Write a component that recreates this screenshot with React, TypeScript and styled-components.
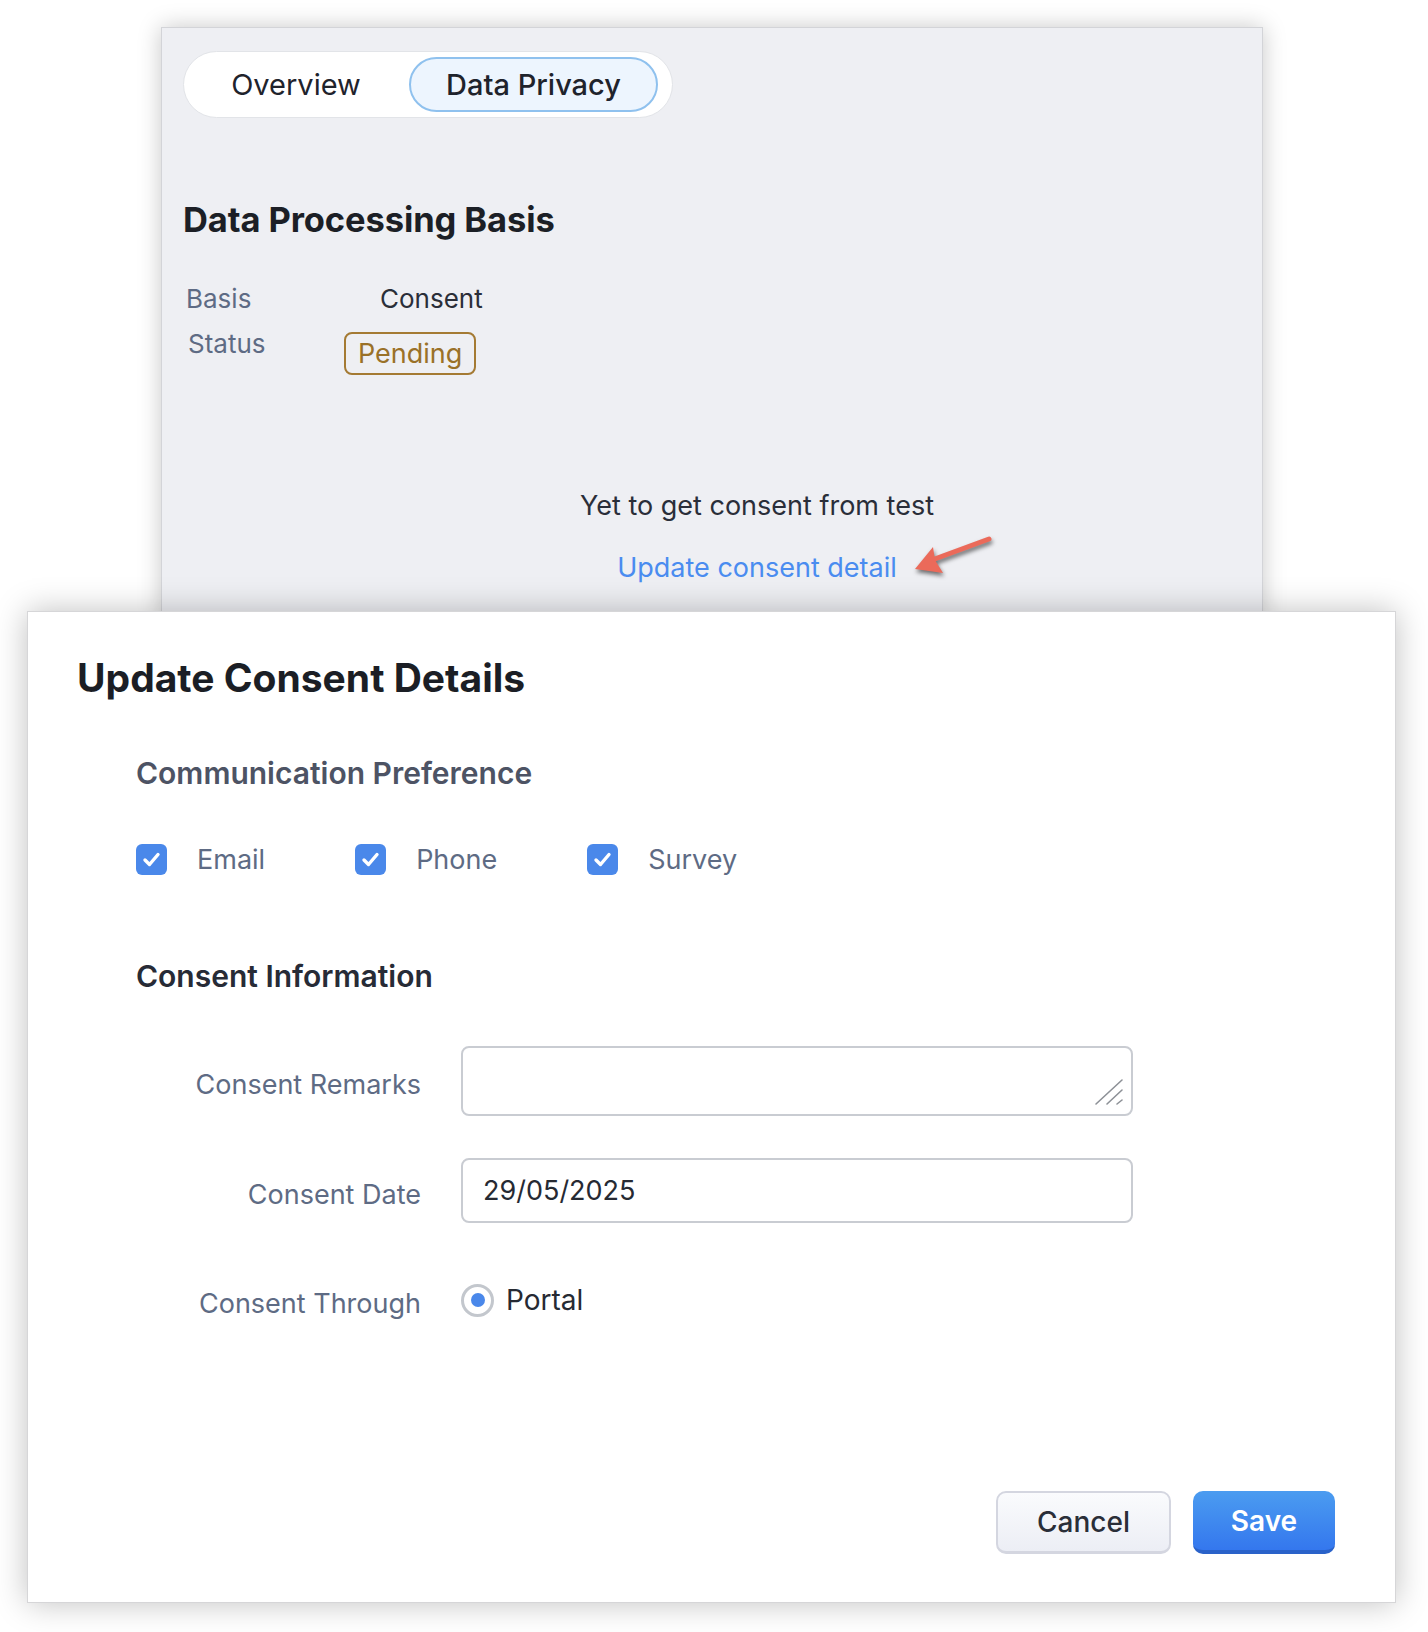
import React from "react";
import styled, { createGlobalStyle } from "styled-components";

const GlobalStyle = createGlobalStyle`
  html, body { margin: 0; padding: 0; background: #ffffff; }
  body {
    font-family: Inter, "Noto Sans", Arial, sans-serif;
    -webkit-font-smoothing: antialiased;
  }
  * { box-sizing: border-box; }
`;

const Page = styled.div`
  width: 1428px;
  height: 1632px;
  padding-top: 27px;
  overflow: hidden;
  background: #ffffff;
`;

/* ---------- Record panel (behind) ---------- */

const RecordPanel = styled.section`
  margin-left: 161px;
  width: 1102px;
  height: 594px;
  margin-bottom: -10px;
  background: #eeeff3;
  border: 1px solid #d3d4d8;
  box-shadow: 0 0 22px rgba(0, 0, 0, 0.22);
  padding: 23px 0 0 21px;
  display: flex;
  flex-direction: column;
`;

const TabSwitch = styled.div`
  display: flex;
  align-items: center;
  gap: 6px;
  width: 490px;
  height: 67px;
  padding: 5px 14px 5px 5px;
  background: #ffffff;
  border: 1px solid #e2e4e8;
  border-radius: 34px;
`;

const Tab = styled.button<{ $active?: boolean }>`
  width: ${(p) => (p.$active ? 249 : 214)}px;
  height: 55px;
  padding: 0;
  border-radius: 28px;
  border: 2px solid ${(p) => (p.$active ? "#8fc1ee" : "transparent")};
  background: ${(p) => (p.$active ? "#edf5fe" : "transparent")};
  font-family: Inter, sans-serif;
  font-size: 29px;
  font-weight: ${(p) => (p.$active ? 500 : 400)};
  color: #1f232c;
  cursor: pointer;
`;

const PanelTitle = styled.h2`
  margin: 81px 0 0 0;
  font-size: 34.5px;
  line-height: 42px;
  font-weight: 700;
  letter-spacing: -0.1px;
  color: #1c1f26;
`;

const InfoRow = styled.div<{ $offset: number; $gap: number }>`
  display: flex;
  align-items: flex-start;
  margin-top: ${(p) => p.$gap}px;
  padding-left: ${(p) => p.$offset}px;
`;

const InfoLabel = styled.span<{ $width: number }>`
  width: ${(p) => p.$width}px;
  font-size: 26px;
  line-height: 36px;
  color: #5e6b84;
`;

const InfoValue = styled.span`
  font-size: 26px;
  line-height: 36px;
  color: #2a2e38;
`;

const StatusBadge = styled.span`
  margin-top: 6px;
  height: 43px;
  padding: 0 12px;
  display: inline-flex;
  align-items: center;
  border: 2px solid #a47a33;
  border-radius: 8px;
  font-size: 27px;
  color: #9a7128;
`;

const ConsentPrompt = styled.div`
  margin-top: 113px;
  padding-left: 69px;
  text-align: center;
`;

const PromptText = styled.div`
  font-size: 27px;
  line-height: 36px;
  color: #2a2e39;
`;

const LinkLine = styled.div`
  margin-top: 26px;
  line-height: 36px;
`;

const ActionLink = styled.a`
  position: relative;
  display: inline-block;
  font-size: 27px;
  line-height: 36px;
  color: #4a8cf0;
  text-decoration: none;
  cursor: pointer;
`;

const ArrowMark = styled.svg`
  position: absolute;
  left: calc(100% + 14px);
  top: -22px;
  overflow: visible;
  filter: drop-shadow(1px 3px 2px rgba(0, 0, 0, 0.55));
`;

/* ---------- Dialog ---------- */

const Dialog = styled.section`
  position: relative;
  z-index: 1;
  margin-left: 27px;
  width: 1369px;
  height: 992px;
  background: #ffffff;
  border: 1px solid #d6d6d8;
  box-shadow: 0 0 30px rgba(0, 0, 0, 0.25);
  display: flex;
  flex-direction: column;
  padding: 42px 60px 48px 49px;
`;

const DialogTitle = styled.h1`
  margin: 0;
  font-size: 39px;
  line-height: 47px;
  font-weight: 700;
  color: #1b1e25;
`;

const Section = styled.div`
  padding-left: 59px;
  display: flex;
  flex-direction: column;
`;

const SectionTitle = styled.h3<{ $muted?: boolean; $gap: number }>`
  margin: ${(p) => p.$gap}px 0 0 0;
  font-size: 30px;
  line-height: 36px;
  font-weight: 600;
  color: ${(p) => (p.$muted ? "#4d5364" : "#272b36")};
`;

const CheckRow = styled.div`
  margin-top: 48px;
  height: 40px;
  display: flex;
  align-items: center;
  gap: 90px;
`;

const CheckItem = styled.label`
  display: flex;
  align-items: center;
  gap: 30px;
  font-size: 27px;
  color: #5e6b84;
  cursor: pointer;
`;

const CheckBox = styled.span`
  width: 31px;
  height: 31px;
  border-radius: 6px;
  background: #4a88ea;
  display: flex;
  align-items: center;
  justify-content: center;
`;

const FormGrid = styled.div`
  margin-top: 52px;
  display: grid;
  grid-template-columns: 285px 672px;
  column-gap: 40px;
  row-gap: 42px;
  align-items: center;
`;

const FieldLabel = styled.div`
  padding-top: 8px;
  text-align: right;
  font-size: 27px;
  line-height: 36px;
  color: #5e6b84;
`;

const TextBox = styled.div<{ $height: number }>`
  position: relative;
  height: ${(p) => p.$height}px;
  border: 2px solid #c9ccd2;
  border-radius: 8px;
  background: #ffffff;
  display: flex;
  align-items: center;
  padding-left: 20px;
  font-size: 27px;
  color: #262a33;
`;

const ResizeGrip = styled.svg`
  position: absolute;
  right: 7px;
  bottom: 8px;
`;

const RadioLine = styled.div`
  height: 70px;
  display: flex;
  align-items: center;
  gap: 12px;
  font-size: 28px;
  color: #262a33;
`;

const Radio = styled.span`
  width: 33px;
  height: 33px;
  border-radius: 50%;
  border: 3px solid #c3c7cd;
  background: #ffffff;
  display: flex;
  align-items: center;
  justify-content: center;
  &::after {
    content: "";
    width: 14px;
    height: 14px;
    border-radius: 50%;
    background: #4a88ea;
  }
`;

const ButtonBar = styled.div`
  margin-top: auto;
  display: flex;
  justify-content: flex-end;
  gap: 22px;
`;

const SecondaryButton = styled.button`
  width: 175px;
  height: 63px;
  border-radius: 10px;
  border: 2px solid #d4d6e0;
  border-bottom-width: 3px;
  background: linear-gradient(#fafbfd, #eceef5);
  font-family: Inter, sans-serif;
  font-size: 28px;
  font-weight: 500;
  color: #2a2e38;
  cursor: pointer;
`;

const PrimaryButton = styled.button`
  width: 142px;
  height: 63px;
  border-radius: 10px;
  border: none;
  border-bottom: 4px solid #2a62c9;
  background: linear-gradient(#4b9cf0, #3477ee);
  font-family: Inter, sans-serif;
  font-size: 28px;
  font-weight: 600;
  color: #ffffff;
  cursor: pointer;
`;

const Check = () => (
  <svg width="19" height="19" viewBox="0 0 19 19">
    <polyline
      points="3,10 7.5,14.5 16,4.5"
      fill="none"
      stroke="#ffffff"
      strokeWidth="3.4"
      strokeLinecap="round"
      strokeLinejoin="round"
    />
  </svg>
);

const prefs = ["Email", "Phone", "Survey"];

export default function App() {
  return (
    <>
      <GlobalStyle />
      <Page>
        <RecordPanel>
          <TabSwitch>
            <Tab>Overview</Tab>
            <Tab $active>Data Privacy</Tab>
          </TabSwitch>

          <PanelTitle>Data Processing Basis</PanelTitle>

          <InfoRow $offset={3} $gap={40}>
            <InfoLabel $width={194}>Basis</InfoLabel>
            <InfoValue>Consent</InfoValue>
          </InfoRow>
          <InfoRow $offset={5} $gap={9}>
            <InfoLabel $width={156}>Status</InfoLabel>
            <StatusBadge>Pending</StatusBadge>
          </InfoRow>

          <ConsentPrompt>
            <PromptText>Yet to get consent from test</PromptText>
            <LinkLine>
              <ActionLink>
                Update consent detail
                <ArrowMark width="90" height="52" viewBox="0 0 90 52">
                  <line
                    x1="21"
                    y1="32"
                    x2="78"
                    y2="11"
                    stroke="#eb6a5a"
                    strokeWidth="5"
                    strokeLinecap="round"
                  />
                  <polygon points="4,41 22,19 24,32 32,45" fill="#eb6a5a" />
                </ArrowMark>
              </ActionLink>
            </LinkLine>
          </ConsentPrompt>
        </RecordPanel>

        <Dialog>
          <DialogTitle>Update Consent Details</DialogTitle>
          <Section>
            <SectionTitle $muted $gap={54}>
              Communication Preference
            </SectionTitle>
            <CheckRow>
              {prefs.map((p) => (
                <CheckItem key={p}>
                  <CheckBox>
                    <Check />
                  </CheckBox>
                  {p}
                </CheckItem>
              ))}
            </CheckRow>

            <SectionTitle $gap={79}>Consent Information</SectionTitle>

            <FormGrid>
              <FieldLabel>Consent Remarks</FieldLabel>
              <TextBox $height={70}>
                <ResizeGrip width="30" height="30" viewBox="0 0 30 30">
                  <line x1="2" y1="28" x2="28" y2="4" stroke="#8d9197" strokeWidth="1.6" strokeLinecap="round" />
                  <line x1="13" y1="28" x2="28" y2="14" stroke="#8d9197" strokeWidth="1.6" strokeLinecap="round" />
                  <line x1="23" y1="28" x2="28" y2="24" stroke="#8d9197" strokeWidth="1.6" strokeLinecap="round" />
                </ResizeGrip>
              </TextBox>

              <FieldLabel>Consent Date</FieldLabel>
              <TextBox $height={65}>29/05/2025</TextBox>

              <FieldLabel>Consent Through</FieldLabel>
              <RadioLine>
                <Radio />
                Portal
              </RadioLine>
            </FormGrid>
          </Section>

          <ButtonBar>
            <SecondaryButton>Cancel</SecondaryButton>
            <PrimaryButton>Save</PrimaryButton>
          </ButtonBar>
        </Dialog>
      </Page>
    </>
  );
}
